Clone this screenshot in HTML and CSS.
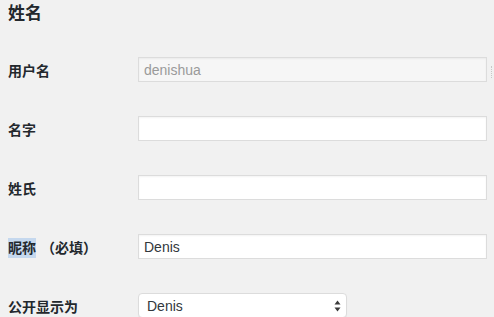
FILE: index.html
```html
<!DOCTYPE html>
<html lang="zh-CN">
<head>
  <meta charset="UTF-8" />
  <meta name="viewport" content="width=device-width, initial-scale=1.0" />
  <title>个人资料</title>
  <link rel="stylesheet" href="styles.css">
</head>
<body>
  <h2 class="section-title">姓名</h2>

  <div class="form-table">
    <div class="field-row">
      <label for="user_login">用户名</label>
      <div class="field">
        <input type="text" id="user_login" class="regular-text" value="denishua" disabled />
        <span class="edge-mark"></span>
      </div>
    </div>

    <div class="field-row">
      <label for="first_name">名字</label>
      <div class="field">
        <input type="text" id="first_name" class="regular-text" value="" />
      </div>
    </div>

    <div class="field-row">
      <label for="last_name">姓氏</label>
      <div class="field">
        <input type="text" id="last_name" class="regular-text" value="" />
      </div>
    </div>

    <div class="field-row">
      <label for="nickname"><span class="selected">昵称</span> <span class="required">（必填）</span></label>
      <div class="field">
        <input type="text" id="nickname" class="regular-text" value="Denis" />
      </div>
    </div>

    <div class="field-row">
      <label for="display_name">公开显示为</label>
      <div class="field">
        <div class="select-wrap">
          <select id="display_name">
            <option>Denis</option>
            <option>denishua</option>
          </select>
          <svg class="select-arrows" width="7" height="12" viewBox="0 0 7 12">
            <path d="M3.5 0.5 L6.5 4.5 L0.5 4.5 Z" fill="#3a3a3a" />
            <path d="M3.5 11.5 L6.5 7.5 L0.5 7.5 Z" fill="#3a3a3a" />
          </svg>
        </div>
      </div>
    </div>
  </div>
</body>
</html>
```

FILE: styles.css
```css
:root {
  --bg: #f1f1f1;
  --text: #23282d;
  --input-border: #dcdcdc;
  --input-bg: #fff;
  --disabled-bg: #f6f6f6;
  --disabled-text: #9a9a9a;
}

body {
  margin: 0;
  padding: 0 8px;
  background-color: var(--bg);
  color: var(--text);
  font-family: "Liberation Sans", "Noto Sans CJK SC", sans-serif;
  overflow: hidden;
}

.section-title {
  margin: 0 0 13px;
  font-size: 17px;
  line-height: 27px;
  font-weight: 700;
}

.field-row {
  display: grid;
  grid-template-columns: 130px auto;
  align-items: center;
  height: 59px;
}

.field-row label {
  font-size: 14px;
  font-weight: 700;
  white-space: nowrap;
}

.selected {
  background-color: #c5d8ee;
  padding: 2px 0;
}

.required {
  margin-left: 1px;
}

.field {
  display: flex;
  align-items: center;
  white-space: nowrap;
}

input,
select {
  box-sizing: border-box;
  height: 25px;
  margin: 0;
  padding: 0 5px;
  border: 1px solid var(--input-border);
  background: var(--input-bg);
  color: #32373c;
  font-family: "Liberation Sans", "Noto Sans CJK SC", sans-serif;
  font-size: 14px;
  box-shadow: inset 0 1px 2px rgba(0, 0, 0, 0.05);
  outline: none;
}

.regular-text {
  width: 349px;
  flex: none;
}

input:disabled {
  background: var(--disabled-bg);
  color: var(--disabled-text);
}

.edge-mark {
  width: 2px;
  height: 12px;
  margin-left: 4px;
  margin-top: 4px;
  border-left: 1px dotted #c8c8c8;
}

.select-wrap {
  position: relative;
  width: 209px;
}

select {
  width: 100%;
  padding-left: 8px;
  border-radius: 4px;
  -webkit-appearance: none;
  appearance: none;
  box-shadow: 0 1px 1px rgba(0, 0, 0, 0.04);
}

.select-arrows {
  position: absolute;
  right: 6px;
  top: 7px;
  pointer-events: none;
}
```
